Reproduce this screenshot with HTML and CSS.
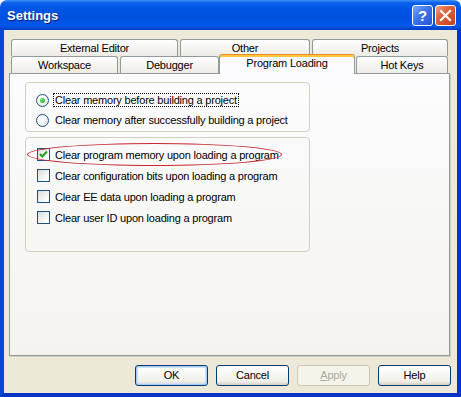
FILE: index.html
```html
<!DOCTYPE html>
<html lang="en">
<head>
    <meta charset="UTF-8">
    <title>Settings</title>
    <link rel="stylesheet" href="styles.css">
</head>
<body>
    <div class="window">
        <div class="titlebar">
            <span class="title">Settings</span>
            <div class="caption-btns">
                <div class="cap-btn help">?</div>
                <div class="cap-btn close">
                    <svg width="13" height="13" viewBox="0 0 13 13">
                        <path d="M2 2 L11 11 M11 2 L2 11" stroke="#fff" stroke-width="2.2" stroke-linecap="square"/>
                    </svg>
                </div>
            </div>
        </div>

        <div class="client">
            <!-- Tabs -->
            <div class="tab-row">
                <div class="tab w-ext">External Editor</div>
                <div class="tab w-other">Other</div>
                <div class="tab w-proj">Projects</div>
            </div>
            <div class="tab-row">
                <div class="tab w-ws">Workspace</div>
                <div class="tab w-dbg">Debugger</div>
                <div class="tab w-pl selected">Program Loading</div>
                <div class="tab w-hk">Hot Keys</div>
            </div>

            <div class="panel">
                <div class="group radios">
                    <div class="opt">
                        <span class="radio checked"></span>
                        <span class="label focus">Clear memory before building a project</span>
                    </div>
                    <div class="opt">
                        <span class="radio"></span>
                        <span class="label">Clear memory after successfully building a project</span>
                    </div>
                </div>

                <div class="group checks">
                    <div class="opt">
                        <span class="check checked">
                            <svg width="11" height="11" viewBox="0 0 11 11">
                                <path d="M2 5 L4.3 7.5 L9 2.5" fill="none" stroke="#21A121" stroke-width="2"/>
                            </svg>
                        </span>
                        <span class="label">Clear program memory upon loading a program</span>
                    </div>
                    <div class="opt">
                        <span class="check"></span>
                        <span class="label">Clear configuration bits upon loading a program</span>
                    </div>
                    <div class="opt">
                        <span class="check"></span>
                        <span class="label">Clear EE data upon loading a program</span>
                    </div>
                    <div class="opt">
                        <span class="check"></span>
                        <span class="label">Clear user ID upon loading a program</span>
                    </div>
                    <!-- red highlight ring -->
                    <div class="ring"></div>
                </div>
            </div>

            <div class="buttons">
                <div class="btn default">OK</div>
                <div class="btn">Cancel</div>
                <div class="btn disabled"><u>A</u>pply</div>
                <div class="btn">Help</div>
            </div>
        </div>
    </div>
</body>
</html>
```

FILE: styles.css
```css
* {
    margin: 0;
    padding: 0;
    box-sizing: border-box;
}

body {
    background: #ffffff;
    font-family: "Liberation Sans", Arial, sans-serif;
    font-size: 11px;
    letter-spacing: -0.2px;
    color: #000;
}

.window {
    width: 461px;
    height: 397px;
    display: flex;
    flex-direction: column;
    border-radius: 7px 7px 0 0;
    overflow: hidden;
}

/* Title bar */
.titlebar {
    height: 30px;
    display: flex;
    align-items: center;
    justify-content: space-between;
    padding: 0 5px 0 7px;
    background: linear-gradient(to bottom, #3d8ef8 0%, #0a5fed 10%, #0055e5 30%, #0050e0 60%, #0058ea 85%, #003dc6 100%);
}

.title {
    color: #fff;
    font-weight: bold;
    font-size: 13px;
    letter-spacing: 0;
    text-shadow: 1px 1px 0 #0a1d80;
    margin-top: 1px;
}

.caption-btns {
    display: flex;
    gap: 2px;
    margin-top: 1px;
}

.cap-btn {
    width: 21px;
    height: 21px;
    border: 1px solid #fff;
    border-radius: 3px;
    display: flex;
    align-items: center;
    justify-content: center;
    color: #fff;
}

.help {
    background: linear-gradient(135deg, #7ea7f6 0%, #3d72ec 45%, #2556d6 100%);
    font-weight: bold;
    font-size: 15px;
}

.close {
    background: linear-gradient(135deg, #f0a389 0%, #e0603a 40%, #c8401a 100%);
}

/* Client area */
.client {
    flex: 1;
    background: #ece9d8;
    border-left: 4px solid #0846d8;
    border-right: 4px solid #0733c8;
    border-bottom: 4px solid #0833c4;
    padding: 9px 6px 7px 5px;
    display: flex;
    flex-direction: column;
}

.tab-row {
    display: flex;
    height: 17px;
    margin-left: 2px;
    gap: 2px;
}

.tab {
    height: 17px;
    border: 1px solid #919b9c;
    border-bottom: none;
    border-radius: 3px 3px 0 0;
    background: linear-gradient(to bottom, #ffffff, #ecebe5);
    text-align: center;
    line-height: 16px;
    white-space: nowrap;
}

.w-ext { width: 167px; }
.w-other { width: 130px; }
.w-proj { width: 136px; }
.w-ws { width: 107px; }
.w-dbg { width: 99px; margin-right: -2px; }
.w-pl { width: 136px; }
.w-hk { width: 92px; margin-left: -1px; }

.tab.selected {
    position: relative;
    z-index: 2;
    height: 20px;
    margin-top: -2px;
    background: #fcfcfe;
    border-top: 1px solid #e68b2c;
    box-shadow: inset 0 2px 0 #ffc83c;
    line-height: 17px;
}

/* Tab page */
.panel {
    width: 441px;
    height: 283px;
    border: 1px solid #919b9c;
    background: linear-gradient(to bottom, #fcfcfe, #f4f3ee);
    box-shadow: 1px 1px 0 #d0cebf;
    padding: 8px 0 0 15px;
}

.group {
    position: relative;
    width: 285px;
    border: 1px solid #d0d0bf;
    border-radius: 4px;
}

.radios {
    height: 50px;
    padding: 7px 0 0 10px;
}

.checks {
    height: 115px;
    margin-top: 5px;
    padding: 6px 0 0 11px;
}

.opt {
    display: flex;
    align-items: center;
}

.radios .opt {
    height: 20px;
}

.checks .opt {
    height: 21px;
}

.radio {
    width: 13px;
    height: 13px;
    border: 1px solid #1c5180;
    border-radius: 50%;
    background: radial-gradient(circle at 35% 35%, #ffffff 20%, #dcdcd7 100%);
    margin-right: 4px;
    display: flex;
    align-items: center;
    justify-content: center;
    flex: none;
}

.radio.checked::after {
    content: "";
    width: 5px;
    height: 5px;
    border-radius: 50%;
    background: radial-gradient(circle at 35% 35%, #6ee56e, #21a121);
}

.check {
    width: 13px;
    height: 13px;
    border: 1px solid #1c5180;
    background: linear-gradient(135deg, #dcdcd7 0%, #ffffff 85%);
    margin-right: 3px;
    display: flex;
    align-items: center;
    justify-content: center;
    flex: none;
}

.label {
    white-space: nowrap;
    padding: 0 1px;
    border: 1px solid transparent;
}

.label.focus {
    border: 1px dotted #000;
}

.ring {
    position: absolute;
    left: 1px;
    top: 5px;
    width: 255px;
    height: 23px;
    border: 1px solid #c8282e;
    border-radius: 50%;
}

/* Dialog buttons */
.buttons {
    display: flex;
    justify-content: flex-end;
    gap: 8px;
    margin-top: 9px;
}

.btn {
    width: 73px;
    height: 21px;
    border: 1px solid #003c74;
    border-radius: 3px;
    background: linear-gradient(to bottom, #ffffff, #f0f0ea 80%, #d6d0c5);
    text-align: center;
    line-height: 19px;
}

.btn.default {
    box-shadow: inset 0 0 0 1px #aac8f4, inset 0 0 0 2px #cfe0fb;
}

.btn.disabled {
    border-color: #c9c7ba;
    background: #f5f4ea;
    color: #aca899;
}
```
